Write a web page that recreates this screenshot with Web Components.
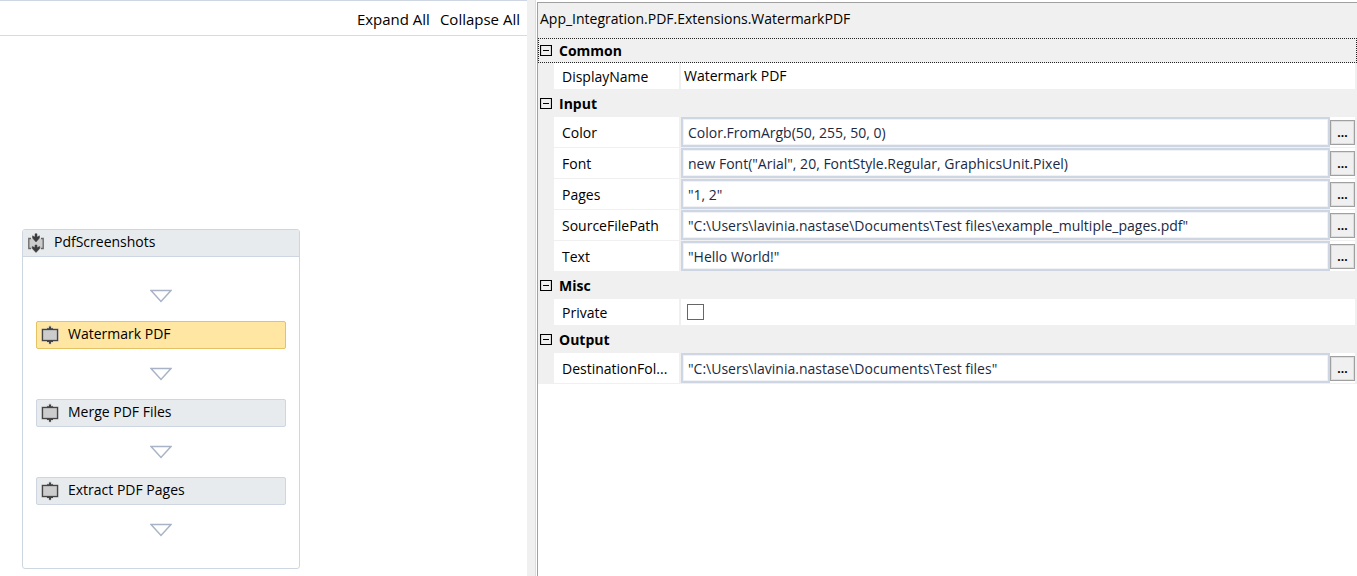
<!DOCTYPE html>
<html lang="en">
<head>
<meta charset="utf-8">
<title>Workflow designer</title>
<style>
body{margin:0;font:14px/20px "Open Sans","Noto Sans",sans-serif;color:#000;background:#fff}
</style>
</head>
<body>
<designer-app></designer-app>
<script>
const define = (name, html, setup) => {
  const tpl = document.createElement('template');
  tpl.innerHTML = html;
  customElements.define(name, class extends HTMLElement {
    constructor() {
      super();
      this.attachShadow({mode: 'open'}).append(tpl.content.cloneNode(true));
    }
    connectedCallback() { if (setup) setup(this, this.shadowRoot); }
  });
};

define('flow-arrow', `
<style>:host{display:flex;justify-content:center;align-items:center;height:50px}svg{display:block}</style>
<svg width="22" height="14" viewBox="0 0 22 14"><path d="M1 1.5H21L11 12.5Z" fill="#fff" stroke="#a9b3c6" stroke-width="1.5"/></svg>`);

define('activity-item', `
<style>
:host{display:block}
button{box-sizing:border-box;display:flex;align-items:center;gap:8px;width:100%;height:28px;margin:0;padding:2px 4px;border:1px solid #ced6e2;border-radius:2px;background:#e8ebee;color:inherit;font:inherit;text-align:left}
:host([selected]) button{background:#ffe6a2;border-color:#e5c365}
svg{flex:none}
span{padding-bottom:2px}
</style>
<button type="button"><svg width="19" height="20" viewBox="0 0 19 20"><path d="M0 3.500H5L9 0 13 3.500H18V16.500H13L9 20 5 16.500H0Z" fill="#c5c7ca" opacity=".6"/><path d="M6 3.200H8V1.500H10V3.200H12V4H6ZM6 16H12V17H10V18.700H8V17H6Z" fill="#444"/><rect x="1.500" y="4.500" width="15" height="11" fill="#ccc" stroke="#444" stroke-width="1.300"/></svg><span><slot></slot></span></button>`);

define('sequence-card', `
<style>
:host{display:block;box-sizing:border-box;border:1px solid #ced6e2;border-radius:3px;background:#fff;overflow:hidden}
header{display:flex;align-items:center;gap:8px;height:26px;padding:0 4px;background:#e8ebee;border-bottom:1px solid #ced6e2}
.title{padding-bottom:2px}
.body{padding:14px 13px 13px}
</style>
<header><svg width="19" height="20" viewBox="0 0 19 20"><path d="M1.500 5.500H16.500V15.500H1.500Z" fill="#ccc"/><path d="M4 5.500H1.800V15.500H4M14 5.500H16.200V15.500H14" fill="none" stroke="#666" stroke-width="1.300"/><path d="M8 .8H10V4L12.500 2.800V5L9 9 5.500 5V2.800L8 4ZM8 12H10V14.500L12.800 13.500V15.500L9 19.500 5.200 15.500V13.500L8 14.500Z" fill="#3c3c3c" stroke="#444" stroke-width=".5"/></svg><span class="title"><slot name="title"></slot></span></header>
<div class="body"><slot></slot></div>`);

define('workflow-panel', `
<style>
:host{display:block;min-width:0;border-top:1px solid #ced6e2}
nav{display:flex;justify-content:flex-end;gap:10px;box-sizing:border-box;height:35px;padding:8px 7px 0;border-bottom:1px solid #d5dbe5;font-size:15px}
a{color:inherit;text-decoration:none;white-space:nowrap}
sequence-card{width:278px;max-width:calc(100% - 44px);margin:193px 22px 0}
</style>
<nav><a href="#expand">Expand All</a><a href="#collapse">Collapse All</a></nav>
<sequence-card>
<span slot="title">PdfScreenshots</span>
<flow-arrow></flow-arrow>
<activity-item selected>Watermark PDF</activity-item>
<flow-arrow></flow-arrow>
<activity-item>Merge PDF Files</activity-item>
<flow-arrow></flow-arrow>
<activity-item>Extract PDF Pages</activity-item>
<flow-arrow></flow-arrow>
</sequence-card>`);

define('property-group', `
<style>
:host{display:block;background:#f0f0f0;padding-right:2px}
button{box-sizing:border-box;display:flex;align-items:center;gap:7px;width:calc(100% + 2px);height:27px;margin:0;padding:0 2px;border:0;background:none;color:inherit;font:inherit;font-weight:700;text-align:left}
:host([focused]) button{height:25px;border:1px dotted #222;padding:0 1px}
.rows{display:grid;gap:1px;padding:0 0 1px 16px}
svg{flex:none}
</style>
<button type="button" aria-expanded="true"><svg width="12" height="12" viewBox="0 0 12 12"><path d="M.5 .5H11.500V10.500H.5ZM3 5.500H9" fill="none" stroke="#000" stroke-width="1.200"/></svg><span></span></button>
<div class="rows"><slot></slot></div>`,
(el, root) => { root.querySelector('span').textContent = el.getAttribute('name'); });

define('property-row', `
<style>
:host{display:grid;grid-template-columns:125px minmax(0,1fr);gap:2px;height:30px}
:host([short]){height:26px}
label{display:flex;align-items:center;padding:2px 0 0 8px;background:#fff;white-space:nowrap;box-sizing:border-box}
.value{display:flex;align-items:center;background:#fff}
input{font:inherit;color:#000;margin:0;box-sizing:border-box;border-radius:0}
.plain{border:0;width:100%;height:20px;padding:0 3px;background:none}
.expr{flex:1;min-width:0;height:30px;border:2px solid #ced6e4;box-shadow:inset 0 0 0 1px #f0f2f6;padding:0 5px;color:#1b2a42;background:#fff}
.check{appearance:none;width:17px;height:16px;margin-left:6px;border:1px solid #666;background:#fff}
button{flex:none;width:25px;height:25px;margin:0;padding:2px 0 0;border:1px solid #a0a0a0;box-shadow:inset 0 0 0 1px #ddd;background:#f0f0f0;color:#000;font:bold 12px/18px "Open Sans","Noto Sans",sans-serif}
</style>
<label for="field"></label><div class="value"><input id="field" spellcheck="false"></div>`,
(el, root) => {
  const input = root.querySelector('input');
  const kind = el.getAttribute('kind') || 'expr';
  root.querySelector('label').textContent = el.getAttribute('label');
  input.className = kind;
  if (kind === 'check') { input.type = 'checkbox'; return; }
  input.type = 'text';
  input.value = el.getAttribute('value');
  if (kind === 'expr' && !root.querySelector('button')) {
    const more = document.createElement('button');
    more.type = 'button';
    more.textContent = '...';
    root.querySelector('.value').append(more);
  }
});

define('properties-panel', `
<style>
:host{display:block;min-width:0;margin-top:2px;border:solid #a0a0a0;border-width:1px 0 0 1px;background:#fff}
h1{margin:0;height:35px;padding:6px 2px 0;box-sizing:border-box;background:#f0f0f0;font:inherit;overflow:hidden;text-overflow:ellipsis}
</style>
<h1>App_Integration.PDF.Extensions.WatermarkPDF</h1>
<property-group name="Common" focused>
<property-row short kind="plain" label="DisplayName" value="Watermark PDF"></property-row>
</property-group>
<property-group name="Input">
<property-row label="Color" value="Color.FromArgb(50, 255, 50, 0)"></property-row>
<property-row label="Font" value='new Font("Arial", 20, FontStyle.Regular, GraphicsUnit.Pixel)'></property-row>
<property-row label="Pages" value='"1, 2"'></property-row>
<property-row label="SourceFilePath" value='"C:\\Users\\lavinia.nastase\\Documents\\Test files\\example_multiple_pages.pdf"'></property-row>
<property-row label="Text" value='"Hello World!"'></property-row>
</property-group>
<property-group name="Misc">
<property-row short kind="check" label="Private"></property-row>
</property-group>
<property-group name="Output">
<property-row label="DestinationFol..." value='"C:\\Users\\lavinia.nastase\\Documents\\Test files"'></property-row>
</property-group>`);

define('designer-app', `
<style>
:host{display:grid;grid-template-columns:minmax(0,527fr) 10px minmax(0,820fr);min-height:100vh}
.splitter{box-sizing:border-box;background:#f0f0f0;border-right:1px solid #fff;box-shadow:inset -1px 0 #ddd}
</style>
<workflow-panel></workflow-panel>
<div class="splitter" role="separator" aria-orientation="vertical"></div>
<properties-panel></properties-panel>`);
</script>
</body>
</html>
